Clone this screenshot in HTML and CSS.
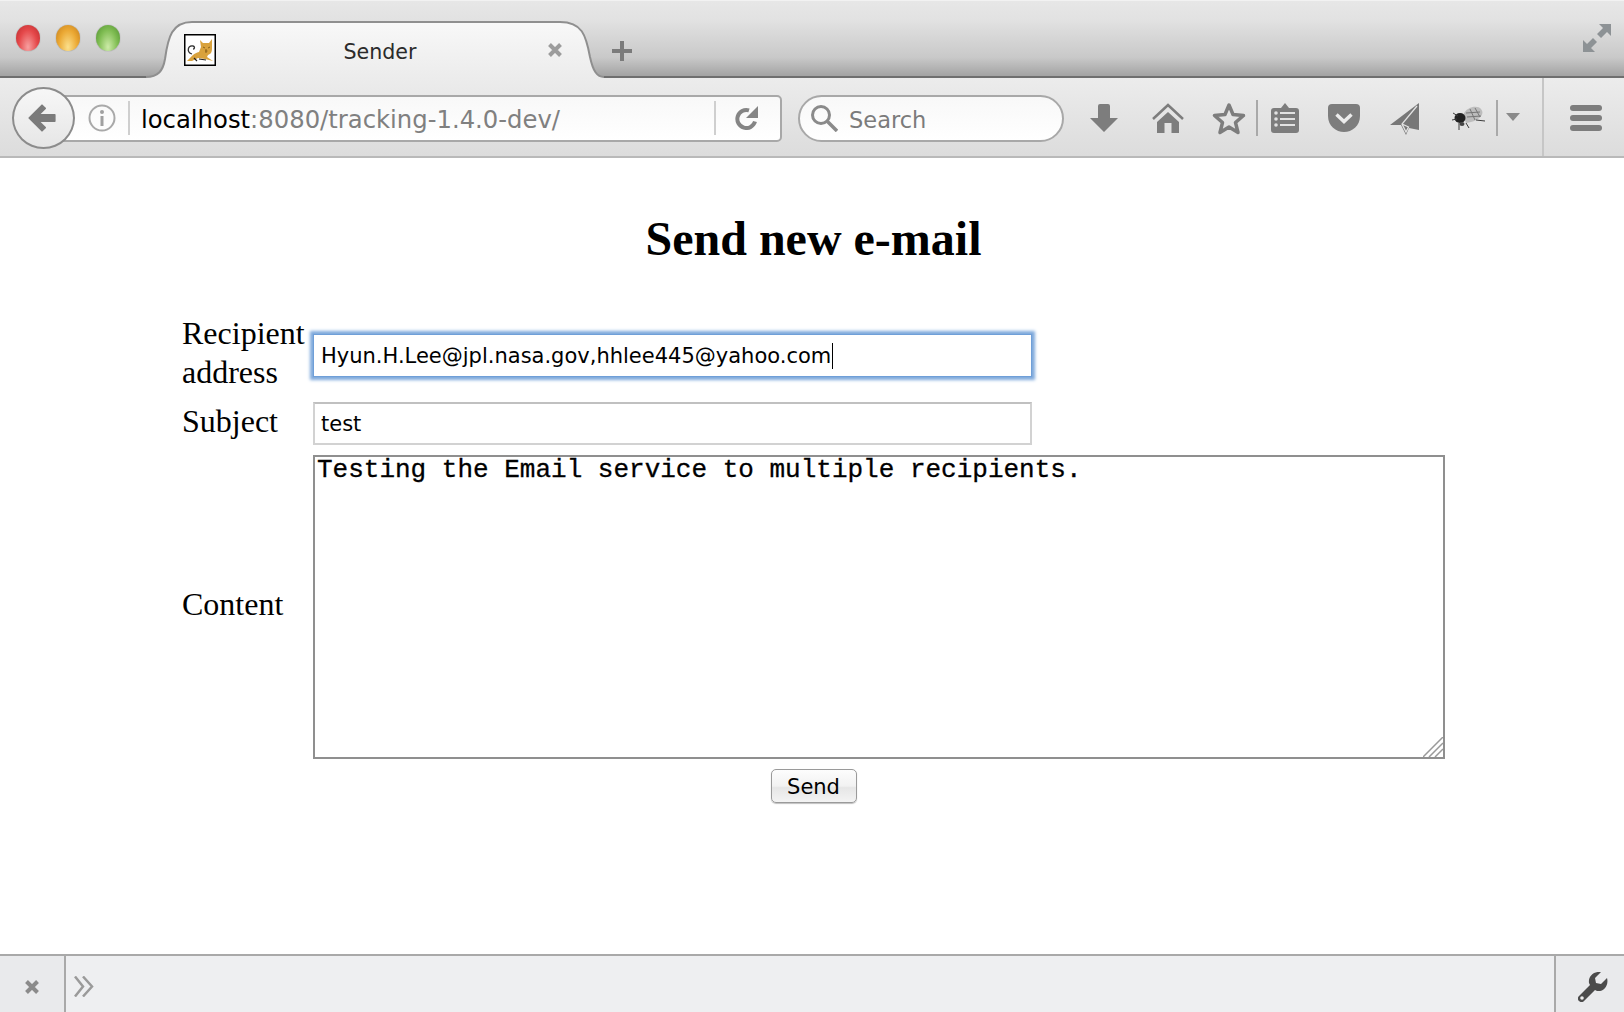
FILE: index.html
```html
<!DOCTYPE html>
<html lang="en">
<head>
    <meta charset="UTF-8">
    <title>Sender</title>
    <link rel="stylesheet" href="styles.css">
</head>
<body>

<div class="browser">
    <!-- Tab strip -->
    <div class="tabstrip">
        <span class="light red"></span>
        <span class="light yellow"></span>
        <span class="light green"></span>

        <div class="tab">
            <svg class="tab-shape" viewBox="0 0 458 57" width="458" height="57">
                <defs>
                    <linearGradient id="tabFill" x1="0" y1="0" x2="0" y2="1">
                        <stop offset="0" stop-color="#f8f8f8"/>
                        <stop offset="1" stop-color="#ececec"/>
                    </linearGradient>
                </defs>
                <path d="M0 56 C12 56 17 50 19 38 C22 16 26 1 46 1 L414 1 C436 1 440 14 444 36 C447 50 451 56 458 56 L458 57 L0 57 Z" fill="url(#tabFill)"/>
                <path d="M0 56 C12 56 17 50 19 38 C22 16 26 1 46 1 L414 1 C436 1 440 14 444 36 C447 50 451 56 458 56" fill="none" stroke="#8f8f8f" stroke-width="2"/>
            </svg>
            <svg class="favicon" viewBox="0 0 32 32" width="32" height="32">
                <rect x="0.75" y="0.75" width="30.5" height="30.5" fill="#fff" stroke="#000" stroke-width="1.5"/>
                <path d="M3 27 C8 22 10 19 15 18 L17 13 L16 6 L19 9 L25 9 L28 5 L28 14 C28 18 27 20 24 21 L23 23 L29 27 L21 25 L14 24 L8 27 Z" fill="#d9a23c"/>
                <path d="M8 20 C2 18 4 11 9 12 C11 12.5 11 15 9 15" fill="none" stroke="#333" stroke-width="1.3"/>
                <path d="M19 13 L21 14 M26 13 L24 14 M21 17 L23.5 17 M22 15 V19" stroke="#8a6118" stroke-width="1"/>
                <path d="M10 24 L13 27 M15 25 L22 26" stroke="#222" stroke-width="1.2"/>
            </svg>
            <span class="tab-title">Sender</span>
            <svg class="tab-close" viewBox="0 0 16 16" width="16" height="16">
                <path d="M2.5 2.5 L13.5 13.5 M13.5 2.5 L2.5 13.5" stroke="#9c9c9c" stroke-width="4"/>
            </svg>
        </div>

        <svg class="newtab" viewBox="0 0 20 20" width="20" height="20">
            <path d="M10 0 V20 M0 10 H20" stroke="#7b7b7b" stroke-width="4"/>
        </svg>

        <svg class="fullscreen" viewBox="0 0 28 28" width="28" height="28">
            <path d="M28 0 V12 L24 8 L18 14 L14 10 L20 4 L16 0 Z M0 28 V16 L4 20 L10 14 L14 18 L8 24 L12 28 Z" fill="#8d9295"/>
        </svg>
    </div>

    <!-- Navigation toolbar -->
    <div class="toolbar">
        <div class="back">
            <svg viewBox="0 0 30 30" width="32" height="32">
                <path d="M15 3 L3 15 L15 27 L18 24 L12 18 H27 V12 H12 L18 6 Z" fill="#7b7b7b" stroke="#7b7b7b" stroke-width="1.5" stroke-linejoin="round"/>
            </svg>
        </div>

        <div class="urlbar">
            <svg class="info" viewBox="0 0 28 28" width="28" height="28">
                <circle cx="14" cy="14" r="12.5" fill="none" stroke="#a9a9a9" stroke-width="2"/>
                <circle cx="14" cy="8" r="2" fill="#a0a0a0"/>
                <rect x="12.5" y="12" width="3" height="10" fill="#a0a0a0"/>
            </svg>
            <span class="url-sep"></span>
            <span class="url"><span class="host">localhost</span>:8080/tracking-1.4.0-dev/</span>
            <span class="url-sep reload-sep"></span>
            <svg class="reload" viewBox="0 0 24 24" width="24" height="24">
                <path d="M20 15.5 A9 9 0 1 1 14 4.4" fill="none" stroke="#858585" stroke-width="4"/>
                <path d="M23 0 V12 H11 Z" fill="#858585"/>
            </svg>
        </div>

        <div class="searchbar">
            <svg viewBox="0 0 28 28" width="28" height="28">
                <circle cx="11" cy="11" r="8.5" fill="none" stroke="#8a8a8a" stroke-width="3"/>
                <path d="M17 17 L27 27" stroke="#8a8a8a" stroke-width="3.5"/>
            </svg>
            <span>Search</span>
        </div>

        <svg class="tool tool-download" viewBox="0 0 30 28" width="30" height="28">
            <path d="M9 2 Q9 0 11 0 H19 Q21 0 21 2 V14 H29 L15 28 L1 14 H9 Z" fill="#7d7d7d"/>
        </svg>
        <svg class="tool tool-home" viewBox="0 0 34 30" width="34" height="30">
            <path d="M2 16 L17 2 L32 16" fill="none" stroke="#7d7d7d" stroke-width="2.5"/>
            <path d="M6 19 L17 9 L28 19 V30 H20.5 V20 H13.5 V30 H6 Z" fill="#7d7d7d"/>
        </svg>
        <svg class="tool tool-star" viewBox="0 0 34 33" width="34" height="33">
            <path d="M17 3 L21 12.5 L31.5 13.5 L23.5 20.5 L26 30.5 L17 25 L8 30.5 L10.5 20.5 L2.5 13.5 L13 12.5 Z" fill="none" stroke="#7d7d7d" stroke-width="3.5" stroke-linejoin="round"/>
        </svg>
        <span class="tool-sep sep-star"></span>
        <svg class="tool tool-list" viewBox="0 0 28 30" width="28" height="30">
            <path d="M3 5 H10 L14 0 L18 5 H25 Q28 5 28 8 V27 Q28 30 25 30 H3 Q0 30 0 27 V8 Q0 5 3 5 Z" fill="#7d7d7d"/>
            <path d="M9 10 H24 M9 16 H24 M9 22 H24" stroke="#e2e2e2" stroke-width="2"/>
            <circle cx="5" cy="10" r="1.8" fill="#e2e2e2"/>
            <circle cx="5" cy="16" r="1.8" fill="#e2e2e2"/>
            <circle cx="5" cy="22" r="1.8" fill="#e2e2e2"/>
        </svg>
        <svg class="tool tool-pocket" viewBox="0 0 32 28" width="32" height="28">
            <path d="M4 0 H28 Q32 0 32 4 V12 C32 22 24 28 16 28 C8 28 0 22 0 12 V4 Q0 0 4 0 Z" fill="#7d7d7d"/>
            <path d="M8.5 10.5 L16 17.5 L23.5 10.5" fill="none" stroke="#ececec" stroke-width="3.5"/>
        </svg>
        <svg class="tool tool-plane" viewBox="0 0 30 33" width="30" height="33">
            <path d="M29 1 L0 23 L11 23 L16 33 L19 26 L29 28 Z" fill="#777"/>
            <path d="M27 4 L12 22 L16 30 L18.5 25 L12 22" fill="none" stroke="#e2e2e2" stroke-width="1.3"/>
        </svg>
        <svg class="tool tool-bee" viewBox="0 0 34 26" width="34" height="26">
            <path d="M11 10 C15 1 26 0 29 4 C34 10 25 17 14 18 Z" fill="#bdbdbd"/>
            <path d="M14 8 L28 7 M15 12 L29 11 M18 4 L23 15 M23 3 L28 12" stroke="#767676" stroke-width="1"/>
            <ellipse cx="8" cy="13" rx="5.5" ry="5" fill="#222"/>
            <ellipse cx="10" cy="19" rx="2.5" ry="2" fill="#444"/>
            <path d="M1 8 L6 11 M0 15 L5 14 M7 18 L7 25 M14 18 L17 23 M24 15 L33 16" stroke="#3c3c3c" stroke-width="1"/>
        </svg>
        <span class="tool-sep sep-bee"></span>
        <svg class="tool tool-drop" viewBox="0 0 14 8" width="14" height="8">
            <path d="M0 0 H14 L7 8 Z" fill="#8a8a8a"/>
        </svg>
        <span class="tool-divider"></span>
        <div class="menu"><span></span><span></span><span></span></div>
    </div>

    <!-- Page -->
    <div class="page">
        <h1>Send new e-mail</h1>
        <div class="mail-form">
            <div class="form-label">Recipient address</div>
            <div class="field focused">Hyun.H.Lee@jpl.nasa.gov,hhlee445@yahoo.com<span class="caret"></span></div>

            <div class="form-label label-subject">Subject</div>
            <div class="field">test</div>

            <div class="form-label label-content">Content</div>
            <div class="content-wrap">
                <textarea class="content-box">Testing the Email service to multiple recipients.</textarea>
                <svg class="grip" viewBox="0 0 20 20" width="20" height="20">
                    <path d="M0 20 L20 0 M6 20 L20 6 M12 20 L20 12" stroke="#9a9a9a" stroke-width="1.5"/>
                </svg>
            </div>
        </div>
        <div class="actions">
            <button class="send">Send</button>
        </div>
    </div>

    <!-- Developer toolbar -->
    <div class="devbar">
        <div class="dev-close">
            <svg viewBox="0 0 16 16" width="16" height="16">
                <path d="M2.5 2.5 L13.5 13.5 M13.5 2.5 L2.5 13.5" stroke="#8b8b8b" stroke-width="4"/>
            </svg>
        </div>
        <div class="dev-prompt">
            <svg viewBox="0 0 20 21" width="20" height="21">
                <path d="M1 0.5 L9 10.5 L1 20.5 M9 0.5 L18 10.5 L9 20.5" fill="none" stroke="#9a9a9a" stroke-width="2.5"/>
            </svg>
        </div>
        <div class="dev-tools">
            <svg viewBox="0 0 30 30" width="30" height="30">
                <path d="M29 6 L23 12 L18 11 L17 6 L23 0 C16 -1 10 4 11 11 L12 13 L1 24 C-1 26 0 28 1 29 C2 30 4 31 6 29 L17 18 L19 19 C26 20 31 13 29 6 Z" fill="#4b4b4b"/>
                <circle cx="4" cy="26" r="1.8" fill="#eee"/>
            </svg>
        </div>
    </div>
</div>

</body>
</html>
```

FILE: styles.css
```css
html, body {
    margin: 0;
    padding: 0;
    background: #fff;
}
.browser {
    display: flex;
    flex-direction: column;
    width: 1624px;
    height: 1012px;
    overflow: hidden;
}

/* tab strip */
.tabstrip {
    display: flex;
    align-items: flex-start;
    flex-shrink: 0;
    height: 75px;
    padding-left: 16px;
    border-top: 1px solid #f2f2f2;
    border-bottom: 2px solid #6f6f6f;
    background: linear-gradient(to bottom, #e7e7e7 0, #e2e2e2 25%, #c9c9c9 75%, #a3a3a3 100%);
}
.light {
    width: 24px;
    height: 26px;
    margin-top: 24px;
    margin-right: 16px;
    border-radius: 50%;
    box-shadow: 0 0 1px rgba(0, 0, 0, 0.5);
}
.red {
    background: radial-gradient(ellipse at 50% 85%, #f7a0a0 0, #e5484a 55%, #b92a2c 100%);
}
.yellow {
    background: radial-gradient(ellipse at 50% 85%, #fbe08c 0, #eba833 55%, #c27c1b 100%);
}
.green {
    background: radial-gradient(ellipse at 50% 85%, #cdeba8 0, #80bd53 55%, #4e8f2e 100%);
}
.tab {
    position: relative;
    display: flex;
    align-items: flex-start;
    box-sizing: border-box;
    width: 458px;
    height: 57px;
    margin-top: 20px;
    margin-left: 10px;
    padding: 13px 44px 0 38px;
}
.tab-shape {
    position: absolute;
    left: 0;
    top: 0;
}
.favicon, .tab-title, .tab-close {
    position: relative;
}
.tab-title {
    flex: 1;
    padding-top: 2px;
    text-align: center;
    font-family: "DejaVu Sans", sans-serif;
    font-size: 20.6px;
    line-height: 32px;
    color: #2b2b2b;
}
.tab-close {
    left: 3px;
    margin-top: 8px;
}
.newtab {
    margin-top: 40px;
    margin-left: 8px;
}
.fullscreen {
    margin-top: 23px;
    margin-left: auto;
    margin-right: 13px;
}

/* toolbar */
.toolbar {
    display: flex;
    align-items: center;
    flex-shrink: 0;
    box-sizing: border-box;
    height: 80px;
    padding-top: 2px;
    padding-left: 12px;
    border-bottom: 2px solid #b9b9b9;
    background: linear-gradient(to bottom, #ececec, #dcdcdc);
}
.back {
    position: relative;
    z-index: 1;
    display: flex;
    align-items: center;
    justify-content: center;
    box-sizing: border-box;
    width: 63px;
    height: 62px;
    margin-right: -15px;
    padding-right: 3px;
    border: 2px solid #8c8c8c;
    border-radius: 50%;
    background: linear-gradient(to bottom, #f7f7f7, #e6e6e6);
}
.urlbar {
    display: flex;
    align-items: center;
    box-sizing: border-box;
    width: 722px;
    height: 47px;
    padding-left: 26px;
    border: 2px solid #a8a8a8;
    border-radius: 0 5px 5px 0;
    background: linear-gradient(to bottom, #f8f8f8, #fff);
}
.info {
    flex-shrink: 0;
}
.url-sep {
    flex-shrink: 0;
    width: 2px;
    height: 34px;
    margin-left: 12px;
    background: #cfcfcf;
}
.url {
    width: 573px;
    margin-left: 11px;
    padding-top: 3px;
    white-space: nowrap;
    font-family: "DejaVu Sans", sans-serif;
    font-size: 24.3px;
    color: #808080;
}
.host {
    color: #000;
}
.reload-sep {
    margin-left: 0;
}
.reload {
    margin-left: 19px;
}
.searchbar {
    display: flex;
    align-items: center;
    gap: 11px;
    box-sizing: border-box;
    width: 266px;
    height: 47px;
    margin-left: 16px;
    padding-left: 10px;
    border: 2px solid #a8a8a8;
    border-radius: 24px;
    background: linear-gradient(to bottom, #f8f8f8, #fff);
    font-family: "DejaVu Sans", sans-serif;
    font-size: 22.5px;
    color: #7b7b7b;
}
.searchbar span {
    padding-top: 3px;
}
.tool {
    flex-shrink: 0;
}
.tool-download { margin-left: 25px; }
.tool-home { margin-left: 32px; }
.tool-star { margin-left: 27px; }
.tool-list { margin-left: 13px; }
.tool-pocket { margin-left: 29px; }
.tool-plane { margin-left: 30px; }
.tool-bee { margin-left: 32px; }
.tool-drop { margin-left: 8px; margin-bottom: 2px; }
.tool-sep {
    flex-shrink: 0;
    width: 2px;
    height: 36px;
    background: #a9a9a9;
}
.sep-star { margin-left: 10px; }
.sep-bee { margin-left: 10px; }
.tool-divider {
    align-self: stretch;
    flex-shrink: 0;
    width: 2px;
    margin-top: -2px;
    margin-left: 22px;
    background: #c6c6c6;
}
.menu {
    display: flex;
    flex-direction: column;
    gap: 4px;
    width: 32px;
    margin-left: 26px;
}
.menu span {
    height: 6px;
    border-radius: 3px;
    background: #7d7d7d;
}

/* page content */
.page {
    flex: 1;
    box-sizing: border-box;
    width: 1445px;
    padding-left: 182px;
    background: #fff;
}
h1 {
    margin: 51px 0 0;
    text-align: center;
    font-family: "Liberation Serif", serif;
    font-size: 48px;
    line-height: 60px;
    font-weight: bold;
    color: #000;
}
.mail-form {
    display: grid;
    grid-template-columns: 131px 1fr;
    grid-template-rows: 79px 43px 304px;
    row-gap: 10px;
    margin-top: 44px;
}
.form-label {
    align-self: center;
    font-family: "Liberation Serif", serif;
    font-size: 32px;
    line-height: 39px;
    color: #000;
}
.label-subject {
    margin-bottom: 4px;
}
.label-content {
    margin-bottom: 5px;
}
.field {
    box-sizing: border-box;
    width: 719px;
    height: 43px;
    padding-left: 6px;
    border: 2px solid #d2d2d2;
    border-top-color: #c0c0c0;
    font-family: "DejaVu Sans", sans-serif;
    font-size: 21px;
    line-height: 41px;
    white-space: nowrap;
    color: #000;
}
.focused {
    margin-top: 21px;
    padding-left: 7px;
    border: 1px solid #6f9fd8;
    line-height: 42px;
    box-shadow: 0 0 3px 3px #7ea9dc;
}
.caret {
    display: inline-block;
    width: 1px;
    height: 26px;
    margin-left: 1px;
    vertical-align: -6px;
    background: #000;
}
.content-wrap {
    position: relative;
    line-height: 0;
}
.content-box {
    box-sizing: border-box;
    width: 1132px;
    height: 304px;
    margin: 0;
    padding: 0 2px;
    border: 2px solid #8f8f8f;
    border-radius: 0;
    outline: none;
    resize: none;
    font-family: "Liberation Mono", monospace;
    font-size: 26px;
    line-height: 27px;
    color: #000;
    -webkit-text-stroke: 0.3px #000;
}
.grip {
    position: absolute;
    left: 1110px;
    top: 282px;
}
.actions {
    display: flex;
    justify-content: center;
    margin-top: 10px;
}
.send {
    width: 86px;
    height: 34px;
    padding: 1px 0 0;
    border: 1px solid #9a9a9a;
    border-radius: 5px;
    background: linear-gradient(to bottom, #fdfdfd 0, #f2f2f2 50%, #e6e6e6 55%, #f3f3f3 100%);
    box-shadow: 0 1px 1px rgba(0, 0, 0, 0.25);
    font-family: "DejaVu Sans", sans-serif;
    font-size: 21px;
    color: #000;
}

/* developer toolbar */
.devbar {
    display: flex;
    flex-shrink: 0;
    box-sizing: border-box;
    height: 58px;
    border-top: 2px solid #a9a9a9;
    background: #eeeff1;
}
.dev-close {
    display: flex;
    align-items: center;
    justify-content: center;
    box-sizing: border-box;
    width: 66px;
    padding-top: 5px;
    border-right: 2px solid #a9a9a9;
    background: #e9eaec;
}
.dev-prompt {
    display: flex;
    align-items: center;
    flex: 1;
    padding-top: 5px;
    padding-left: 8px;
}
.dev-tools {
    display: flex;
    align-items: center;
    box-sizing: border-box;
    width: 70px;
    padding-top: 5px;
    padding-left: 22px;
    border-left: 2px solid #a9a9a9;
    background: #e9eaec;
}
```
